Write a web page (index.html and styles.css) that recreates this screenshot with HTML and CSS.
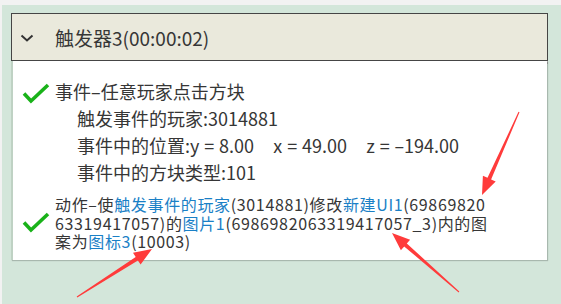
FILE: index.html
```html
<html lang="zh">
<head>
    <meta charset="UTF-8">
    <meta name="viewport" content="width=device-width, initial-scale=1.0"/>
    <title>触发器3</title>
    <link rel="stylesheet" href="styles.css">
</head>
<body>
<div class="frame">
    <div class="header">
        <svg class="chevron" width="14" height="8" viewBox="0 0 14 8">
            <polyline points="1.5,1.5 7,6.5 12.5,1.5" fill="none" stroke="#333" stroke-width="2"/>
        </svg>
        <span class="title">触发器3(00:00:02)</span>
    </div>
    <div class="content">
        <div class="entry">
            <svg class="check" width="28" height="22" viewBox="0 0 28 22">
                <polyline points="2,10.5 9,18 26,2" fill="none" stroke="#19b219" stroke-width="3.6"/>
            </svg>
            <div class="lines event">
                <div>事件–任意玩家点击方块</div>
                <div class="sub">触发事件的玩家:3014881</div>
                <div class="sub">事件中的位置:y = 8.00&nbsp;&nbsp;&nbsp; x = 49.00&nbsp;&nbsp;&nbsp; z = –194.00</div>
                <div class="sub">事件中的方块类型:101</div>
            </div>
        </div>
        <div class="entry action-entry">
            <svg class="check" width="28" height="22" viewBox="0 0 28 22">
                <polyline points="2,10.5 9,18 26,2" fill="none" stroke="#19b219" stroke-width="3.6"/>
            </svg>
            <div class="lines action">
                <div>动作–使<span class="ref">触发事件的玩家</span>(3014881)修改<span class="ref">新建UI1</span>(69869820</div>
                <div>63319417057)的<span class="ref">图片1</span>(6986982063319417057_3)内的图</div>
                <div>案为<span class="ref">图标3</span>(10003)</div>
            </div>
        </div>
    </div>
</div>
<svg class="marks" width="561" height="304" viewBox="0 0 561 304">
    <polygon points="519.5,112.2 491.1,179.4 495.7,181.4 482,195 482.9,175.8 487.5,177.8 518.5,111.8" fill="#ff3b3b"/>
    <polygon points="77.3,297.4 137.9,260.4 140.6,264.6 152,249 133,252.8 135.7,257 76.7,296.6" fill="#ff3b3b"/>
    <polygon points="459.3,291.6 406.8,243.4 410.1,239.7 392,233 400.9,250.2 404.2,246.4 458.7,292.4" fill="#ff3b3b"/>
</svg>
</body>
</html>
```

FILE: styles.css
```css
body {
    margin: 0;
    height: 304px;
    background-color: #f2f2f2;
    font-family: "Noto Sans CJK SC", "Noto Sans", sans-serif;
    color: #363636;
    position: relative;
    overflow: hidden;
}
.frame {
    margin: 5px 0 0 2px;
    height: 299px;
    padding-top: 8px;
    box-sizing: border-box;
    background-color: #d3e6da;
}
.header {
    display: flex;
    align-items: center;
    margin: 0 13px 0 9px;
    height: 48px;
    box-sizing: border-box;
    border: 1px solid #454545;
    background-color: #eae9dc;
    box-shadow: 0 3px 0 #adadad;
}
.chevron {
    margin-left: 8px;
    margin-top: 1px;
}
.title {
    margin-left: 21px;
    font-size: 19px;
}
.content {
    margin: 0 14px 0 9px;
    padding: 17px 0 9px 9px;
    background-color: #fff;
    border-left: 2px solid #bfd2c4;
    box-shadow: 1px 1px 1px rgba(0, 0, 0, 0.2);
}
.entry {
    display: flex;
}
.check {
    flex: none;
    margin-top: 5px;
    margin-right: 5px;
}
.event {
    font-size: 18px;
    word-spacing: 0.8px;
}
.event div {
    line-height: 27px;
}
.event .sub {
    padding-left: 22px;
}
.action-entry {
    align-items: center;
    margin-top: 9px;
}
.action-entry .check {
    margin-top: 0;
}
.action {
    font-size: 16px;
    letter-spacing: 0.65px;
}
.action div {
    line-height: 18.5px;
    white-space: nowrap;
}
.ref {
    color: #1a80c6;
}
.marks {
    position: absolute;
    top: 0;
    left: 0;
    pointer-events: none;
}
```
